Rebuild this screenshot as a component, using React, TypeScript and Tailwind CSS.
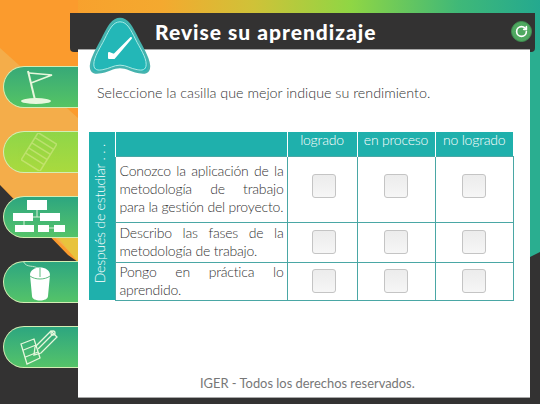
import { RotateCw } from "lucide-react";

const rows = [
  { lines: ["Conozco la aplicación de la", "metodología de trabajo", "para la gestión del proyecto."], height: "h-[66px]", box: "mb-[6px]" },
  { lines: ["Describo las fases de la", "metodología de trabajo."], height: "h-[40px]", box: "" },
  { lines: ["Pongo en práctica lo", "aprendido."], height: "h-[38px]", box: "" },
];

function Background() {
  return (
    <svg className="absolute inset-0" width="540" height="404" viewBox="0 0 540 404">
      <defs>
        <linearGradient id="sky" x1="0" y1="0" x2="1" y2="0">
          <stop offset="0" stopColor="#fb9a2c" />
          <stop offset="0.3" stopColor="#f4a92f" />
          <stop offset="0.47" stopColor="#cfc238" />
          <stop offset="0.65" stopColor="#8fd644" />
          <stop offset="0.85" stopColor="#3fb878" />
          <stop offset="1" stopColor="#24a98f" />
        </linearGradient>
      </defs>
      <rect width="540" height="404" fill="url(#sky)" />
      <polygon points="0,0 78,0 78,404 0,404" fill="#fb9b2d" />
      <polygon points="0,48 78,118 78,260 0,185" fill="#f4ad4a" />
      <polygon points="50,228 78,228 78,262" fill="#e8c33d" />
      <polygon points="0,185 68,255 78,262 540,252 540,404 0,404" fill="#333232" />
      <polygon points="530,50 540,50 540,252 530,257" fill="#2aae90" />
    </svg>
  );
}

function FlagIcon() {
  return (
    <svg width="36" height="38" viewBox="0 0 36 38">
      <ellipse cx="15" cy="33" rx="15" ry="3" fill="#e8f7dc" />
      <path d="M7 3 L14 32" stroke="#e8f7dc" strokeWidth="2" fill="none" />
      <path d="M8 5 L31 7 L10 15" stroke="#e8f7dc" strokeWidth="1.5" fill="none" />
    </svg>
  );
}

function ListIcon() {
  return (
    <svg width="36" height="38" viewBox="0 0 36 38" opacity="0.45">
      <g transform="rotate(32 18 19)" stroke="#e6eda0" strokeWidth="1.5" fill="none">
        <rect x="7" y="3" width="22" height="32" />
        <path d="M7 9 H29 M7 15 H29 M7 21 H29 M7 27 H29" />
      </g>
    </svg>
  );
}

function ChartIcon() {
  return (
    <svg width="54" height="34" viewBox="0 0 54 34">
      <g fill="#fff">
        <rect x="15" y="0" width="20" height="10" />
        <rect x="1" y="13" width="20" height="8" />
        <rect x="28" y="13" width="20" height="8" />
        <rect x="3" y="25" width="19" height="7" />
        <rect x="26" y="25" width="11" height="7" />
        <rect x="42" y="25" width="11" height="7" />
      </g>
      <path d="M25 10 V17 M21 17 H28 M12 21 V25 M37 28 H42" stroke="#d6f0d8" strokeWidth="1" fill="none" />
    </svg>
  );
}

function MouseIcon() {
  return (
    <svg width="36" height="42" viewBox="0 0 36 42">
      <path d="M2 0 C6 8 12 3 18 8" stroke="#bfe6c8" strokeWidth="1" fill="none" />
      <path d="M9 14 C9 4 29 4 29 14 L27 35 C27 41 11 41 11 35 Z" fill="#fff" />
      <path d="M9 15 C14 19 24 19 29 15 M19 7 V16" stroke="#5dbb7f" strokeWidth="1" fill="none" />
    </svg>
  );
}

function PencilIcon() {
  return (
    <svg width="40" height="40" viewBox="0 0 40 40">
      <g stroke="#e6f7dc" strokeWidth="1.3" fill="none">
        <path d="M2 17 L15 12 L21 31 L8 37 Z M4.5 23 L17 18 M6.5 30 L19 25" />
        <path d="M16 20 L32 4 L38 10 L22 26 L15 28 Z M19 22 L34 7" />
        <circle cx="34" cy="6" r="2" />
      </g>
    </svg>
  );
}

function NavTab({ tone, children }: { tone: string; children: React.ReactNode }) {
  return (
    <div className={`w-[75px] h-[42px] rounded-l-[24px] border-[1.5px] border-r-0 border-[#d3eeb4] flex items-center justify-center pr-1 overflow-hidden ${tone}`}>
      {children}
    </div>
  );
}

function Badge() {
  const shape =
    "M31 2 C39 2 43 11 48 21 C53 31 60 41 60 49 C60 56 55 56 50 55 C43 54 38 50 31 50 C24 50 19 54 12 55 C7 56 2 56 2 49 C2 41 9 31 14 21 C19 11 23 2 31 2 Z";
  return (
    <svg className="absolute left-[11px] top-[4px] z-10" width="62" height="58" viewBox="0 0 62 58">
      <path d={shape} fill="#23b7b7" stroke="#45b3ae" strokeWidth="2.5" />
      <path d={shape} fill="none" stroke="#bfeee8" strokeWidth="1" transform="translate(3 3) scale(0.903)" />
      <path d="M20 36 L25 38 L42 21 L25 41 L20 41 Z" fill="#fff" stroke="#fff" strokeWidth="2" strokeLinejoin="round" />
    </svg>
  );
}

function Checkbox({ box }: { box: string }) {
  return (
    <div className={`w-6 h-6 mx-auto rounded-[3px] border border-[#c4c4c4] bg-gradient-to-b from-[#ececec] to-[#f6f6f6] ${box}`} />
  );
}

export default function App() {
  return (
    <div className="relative w-[540px] h-[404px] overflow-hidden bg-[#333232] font-['Lato',sans-serif]">
      <Background />
      <div className="relative flex h-full">
        <nav className="w-[78px] shrink-0 pt-[66px] pl-[3px] flex flex-col gap-[23px]">
          <NavTab tone="bg-gradient-to-b from-[#37a977] to-[#55c463]"><FlagIcon /></NavTab>
          <NavTab tone="bg-gradient-to-b from-[#8fd648] to-[#a9da3e]"><ListIcon /></NavTab>
          <NavTab tone="bg-gradient-to-b from-[#2ca67f] to-[#54c368]"><ChartIcon /></NavTab>
          <NavTab tone="bg-gradient-to-b from-[#2ca67f] to-[#54c368]"><MouseIcon /></NavTab>
          <NavTab tone="bg-gradient-to-b from-[#2ca67f] to-[#54c368]"><PencilIcon /></NavTab>
        </nav>

        <main className="relative w-[452px] mt-[13px] mb-[6px] flex flex-col">
          <Badge />
          <header className="h-[39px] shrink-0 -ml-2 -mr-[5px] pb-[3px] rounded-b-[4px] bg-[#333232] flex items-center justify-between">
            <h1 className="ml-[85px] text-[21px] leading-none font-black text-white tracking-[1px]">
              Revise su aprendizaje
            </h1>
            <div className="w-[21px] h-[21px] mr-[3px] rounded-full bg-[#4fa860] border border-[#3f8f52] flex items-center justify-center">
              <RotateCw size={13} strokeWidth={3} color="#fff" />
            </div>
          </header>

          <section className="relative flex-1 -mt-[3px] bg-white flex flex-col px-[11px] border-t border-b border-[#a8a8a8]">
            <p className="mt-[33px] ml-2 text-[14.3px] leading-5 font-light text-[#333]">
              Seleccione la casilla que mejor indique su rendimiento.
            </p>

            <table className="mt-[29px] w-[424px] table-fixed border-collapse text-[14px] leading-[18px] tracking-[-0.2px]">
              <colgroup>
                <col className="w-[26px]" />
                <col className="w-[172px]" />
                <col className="w-[70px]" />
                <col className="w-[78px]" />
                <col className="w-[78px]" />
              </colgroup>
              <tbody>
                <tr className="h-6 bg-[#1fb0ac] text-white font-light leading-4">
                  <td rowSpan={4} className="bg-[#1fb0ac] p-0 pr-[3px] text-center align-bottom">
                    <span className="inline-block pt-[14px] [writing-mode:vertical-rl] rotate-180 text-white text-[14px] leading-[18px] font-light tracking-[-0.2px] whitespace-nowrap">
                      Después de estudiar . . .
                    </span>
                  </td>
                  <td className="border-l border-white" />
                  <td className="border-l border-white text-center pb-[7px]">logrado</td>
                  <td className="border-l border-white text-center pb-[7px]">en proceso</td>
                  <td className="border-l border-white text-center pb-[7px]">no logrado</td>
                </tr>
                {rows.map((row) => (
                  <tr key={row.lines[0]} className={row.height}>
                    <td className="border border-[#4aa7a5] pl-[4px] pr-[3px] text-[#333] font-light align-middle">
                      {row.lines.map((line, i) => (
                        <span key={line} className={i < row.lines.length - 1 ? "block [text-align-last:justify]" : "block"}>
                          {line}
                        </span>
                      ))}
                    </td>
                    <td className="border border-[#4aa7a5] pl-1 align-middle"><Checkbox box={row.box} /></td>
                    <td className="border border-[#4aa7a5] align-middle"><Checkbox box={row.box} /></td>
                    <td className="border border-[#4aa7a5] align-middle"><Checkbox box={row.box} /></td>
                  </tr>
                ))}
              </tbody>
            </table>

            <footer className="mt-auto mb-[6px] ml-[111px] text-[12.9px] leading-4 text-[#777]">
              IGER - Todos los derechos reservados.
            </footer>
          </section>
        </main>
      </div>
    </div>
  );
}
